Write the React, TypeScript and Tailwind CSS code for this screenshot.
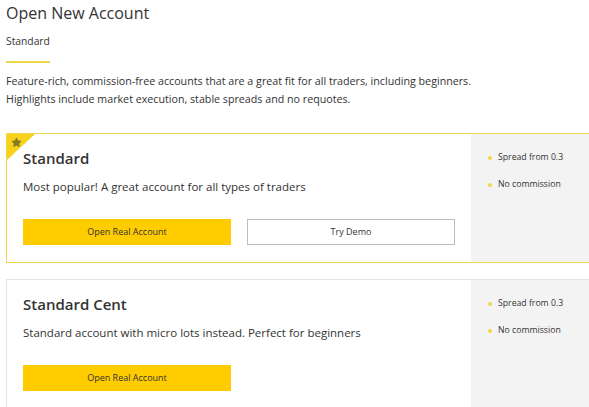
import { Star } from "lucide-react";

const font = { fontFamily: '"Open Sans", "Noto Sans", sans-serif' };

interface Account {
  name: string;
  blurb: string;
  featured?: boolean;
  demo?: boolean;
}

const accounts: Account[] = [
  {
    name: "Standard",
    blurb: "Most popular! A great account for all types of traders",
    featured: true,
    demo: true,
  },
  {
    name: "Standard Cent",
    blurb: "Standard account with micro lots instead. Perfect for beginners",
  },
];

function AccountCard({ acc }: { acc: Account }) {
  return (
    <div
      className={
        "relative flex border border-r-0 " +
        (acc.featured ? "border-[#f2d64b]" : "border-[#e3e3e3]")
      }
    >
      {acc.featured && (
        <div className="absolute left-0 top-0 w-[28px] h-[26px]">
          <div
            className="w-full h-full bg-[#f7d21c]"
            style={{ clipPath: "polygon(0 0, 100% 0, 0 100%)" }}
          />
          <Star
            className="absolute left-[4px] top-[3px] w-[11px] h-[11px] text-[#8a7a1e]"
            fill="currentColor"
            strokeWidth={1}
          />
        </div>
      )}
      <div className="flex-1 pl-[16px] pr-4 pt-[13px] pb-[17px]">
        <div className="text-[15px] leading-[22px] font-semibold text-[#333]">{acc.name}</div>
        <div className="mt-[9px] text-[11.5px] leading-[17px] text-[#333]">{acc.blurb}</div>
        <div className="mt-[24px] flex gap-[16px]">
          <button className="w-[208px] h-[26px] bg-[#ffcc00] text-[9px] text-[#333]">
            Open Real Account
          </button>
          {acc.demo && (
            <button className="w-[208px] h-[26px] border border-[#bdbdbd] bg-white text-[9px] text-[#333]">
              Try Demo
            </button>
          )}
        </div>
      </div>
      <div className="w-[118px] bg-[#f3f3f3] pl-[17px] pt-[17px]">
        {["Spread from 0.3", "No commission"].map((f) => (
          <div key={f} className="flex items-center gap-[6px] h-[14px] mb-[13px] text-[8.7px] text-[#333]">
            <span className="w-[4px] h-[4px] rounded-full bg-[#f2d64b]" />
            {f}
          </div>
        ))}
      </div>
    </div>
  );
}

export default function App() {
  return (
    <div className="w-[589px] h-[407px] overflow-hidden bg-white pl-[6px]" style={font}>
      <h1 className="pt-[2px] text-[16px] leading-[22px] text-[#333]">Open New Account</h1>
      <div className="mt-[9px] text-[10.3px] leading-[16px] text-[#333]">Standard</div>
      <div className="mt-[12px] w-[44px] h-[2px] bg-[#f0d64a]" />
      <p className="mt-[9px] text-[10.7px] leading-[18px] text-[#333]">
        Feature-rich, commission-free accounts that are a great fit for all traders, including beginners.
        <br />
        Highlights include market execution, stable spreads and no requotes.
      </p>
      <div className="mt-[25px] flex flex-col gap-[16px]">
        {accounts.map((a) => (
          <AccountCard key={a.name} acc={a} />
        ))}
      </div>
    </div>
  );
}
